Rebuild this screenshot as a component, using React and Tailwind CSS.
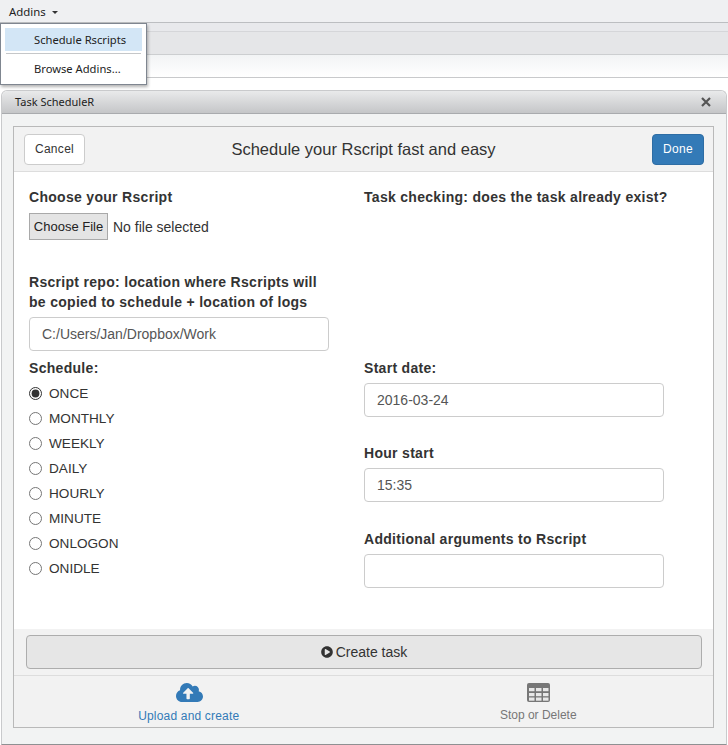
import React from "react";
import { FaCloudUploadAlt, FaPlayCircle } from "react-icons/fa";

const schedules = ["ONCE", "MONTHLY", "WEEKLY", "DAILY", "HOURLY", "MINUTE", "ONLOGON", "ONIDLE"];

const Field = ({ label, value, className }) => (
  <div className={className}>
    <p className="font-bold text-[14px] leading-5 tracking-[0.3px] text-[#333]">{label}</p>
    <input
      readOnly
      value={value}
      className="mt-[5px] block h-[34px] w-[300px] rounded border border-[#ccc] bg-white px-3 text-[14px] text-[#555] outline-none"
    />
  </div>
);

// FA4 "table" glyph, the FA5 one in react-icons has fewer cells
const TableIcon = () => (
  <svg width="23" height="19" viewBox="0 0 23 19">
    <rect width="23" height="19" rx="2" fill="#777" />
    {[5, 10, 14.5].map((y) =>
      [2, 9, 16].map((x) => (
        <rect key={`${x}-${y}`} x={x} y={y} width="5.5" height="3.2" fill="#e8e8e8" />
      ))
    )}
  </svg>
);

const App = () => {
  return (
    <div className="relative h-[745px] w-[728px] overflow-hidden bg-white font-['Liberation_Sans',Arial,sans-serif]">
      {/* RStudio toolbar rows */}
      <div className="h-[23px] border-b border-[#bcbec1] bg-[#eff0f2] pl-[9px] font-['Noto_Sans',sans-serif] text-[11.4px] leading-[24px] text-[#222]">
        Addins
        <span className="ml-[6px] inline-block border-x-[3px] border-t-[3px] border-x-transparent border-t-[#333] align-middle" />
      </div>
      <div className="h-[9px] border-b border-[#d5d6d9] bg-[#e8e9ec]" />
      <div className="h-[23px] border-b border-[#ccced0] bg-[#e5e6e8]" />
      <div className="h-[23px] border-b border-[#c8c9cb] bg-gradient-to-b from-[#f2f4f5] to-white" />

      {/* Addins menu */}
      <div className="absolute left-0 top-[23px] z-10 h-[62px] w-[147px] border border-[#7f8690] bg-white px-1 pt-1 font-['Noto_Sans',sans-serif] text-[11.2px] text-[#222] shadow-[1px_2px_3px_rgba(0,0,0,0.3)]">
        <div className="h-[23px] bg-[#d3e6f6] pl-[29px] leading-[24px]">Schedule Rscripts</div>
        <div className="mx-px mt-[2px] h-px bg-[#c5c7c9]" />
        <div className="pl-[29px] pt-[3px] leading-[23px]">Browse Addins...</div>
      </div>

      {/* Dialog */}
      <div className="mx-px mt-[12px] flex h-[655px] flex-col rounded-t-md border border-[#c9cacc] border-b-[#8f9092] bg-[#f2f3f3]">
        <div className="flex h-[23px] shrink-0 items-center justify-between rounded-t-md border-b border-[#a9abae] bg-gradient-to-b from-[#e9eaeb] to-[#c5c6c8] pl-[13px] pr-[15px] font-['Noto_Sans',sans-serif] text-[11px] text-[#222]">
          <span>Task ScheduleR</span>
          <svg width="10" height="10" viewBox="0 0 10 10" className="text-[#555]">
            <path d="M1 1 L9 9 M9 1 L1 9" stroke="currentColor" strokeWidth="2.2" />
          </svg>
        </div>

        <div className="ml-[11px] mt-3 flex h-[602px] w-[701px] flex-col border border-[#b9b9b9] bg-white text-[#333]">
          {/* Gadget title bar */}
          <div className="flex h-[45px] shrink-0 items-center justify-between border-b border-[#ddd] bg-[#f2f2f2] pl-[10px] pr-[9px]">
            <button className="h-[31px] w-[61px] rounded border border-[#ccc] bg-white text-[12px] tracking-[0.3px] text-[#333]">Cancel</button>
            <h1 className="mr-[10px] text-[16.5px] text-[#333]">Schedule your Rscript fast and easy</h1>
            <button className="h-[31px] w-[52px] rounded border border-[#2e6da4] bg-[#337ab7] text-[12px] tracking-[0.3px] text-white">Done</button>
          </div>

          {/* Form */}
          <div className="grid h-[457px] shrink-0 grid-cols-[335px_1fr] pl-[15px] pt-[15px]">
            <div>
              <p className="text-[14px] font-bold leading-5 tracking-[0.3px]">Choose your Rscript</p>
              <div className="mt-[6px] flex items-center">
                <button className="h-[27px] w-[79px] border border-[#a9a9a9] bg-[#e4e4e4] pt-px text-[13px] text-[#222]">Choose File</button>
                <span className="ml-[5px] mt-px text-[14px]">No file selected</span>
              </div>
              <Field
                label={<>Rscript repo: location where Rscripts will<br />be copied to schedule + location of logs</>}
                value="C:/Users/Jan/Dropbox/Work"
                className="mt-[32px]"
              />
              <p className="mt-[7px] text-[14px] font-bold leading-5 tracking-[0.3px]">Schedule:</p>
              <div className="mt-[3px] flex flex-col">
                {schedules.map((s, i) => (
                  <label key={s} className="flex h-[25px] items-center text-[13.6px]">
                    <input type="radio" name="schedule" readOnly checked={i === 0} className="mr-[7px] h-[13px] w-[13px] accent-[#333]" />
                    <span className="pt-px">{s}</span>
                  </label>
                ))}
              </div>
            </div>
            <div>
              <p className="text-[14px] font-bold leading-5 tracking-[0.3px]">Task checking: does the task already exist?</p>
              <Field label="Start date:" value="2016-03-24" className="mt-[151px]" />
              <Field label="Hour start" value="15:35" className="mt-[26px]" />
              <Field label="Additional arguments to Rscript" value="" className="mt-[27px]" />
            </div>
          </div>

          {/* Action bar */}
          <div className="flex h-[47px] shrink-0 items-center justify-center border-b border-[#ddd] bg-[#f2f2f2] pl-3 pr-[11px]">
            <button className="flex h-[34px] w-full items-center justify-center rounded border border-[#adadad] bg-[#e6e6e6] text-[14px] text-[#333]">
              <FaPlayCircle className="mr-[3px] text-[12px]" />
              Create task
            </button>
          </div>

          {/* Tabs */}
          <div className="grid flex-1 grid-cols-2 bg-[#f2f2f2] text-[12px]">
            <div className="flex flex-col items-center pt-[3px] tracking-[0.18px] text-[#337ab7]">
              <FaCloudUploadAlt className="ml-px text-[27px]" />
              <span className="mt-px">Upload and create</span>
            </div>
            <div className="flex flex-col items-center pt-[7px] text-[#777]">
              <TableIcon />
              <span className="mt-[4px]">Stop or Delete</span>
            </div>
          </div>
        </div>
      </div>
    </div>
  );
};

export default App;
